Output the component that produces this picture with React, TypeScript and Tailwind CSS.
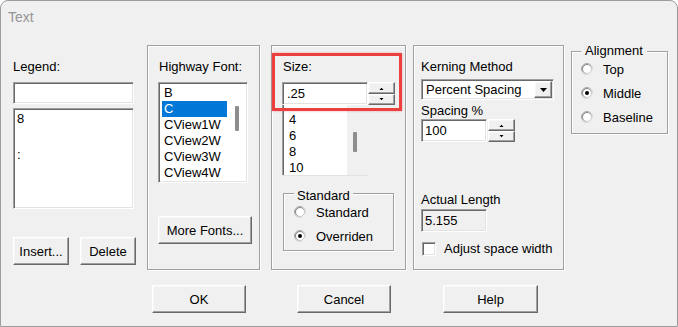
import React from "react";

const sunken =
  "border border-t-[#a0a0a0] border-l-[#a0a0a0] border-r-white border-b-white shadow-[inset_1px_1px_0_#696969,inset_-1px_-1px_0_#e3e3e3]";
const raised =
  "border border-t-white border-l-white border-r-[#696969] border-b-[#696969] shadow-[inset_-1px_-1px_0_#a0a0a0,inset_1px_1px_0_#f7f7f7] bg-[#f0f0f0]";
const etched = "border border-[#a0a0a0] shadow-[inset_1px_1px_0_#ffffff,1px_1px_0_#ffffff]";

function Btn({ className, children }: { className: string; children: React.ReactNode }) {
  return (
    <div className={`${raised} ${className} flex items-center justify-center leading-[15px]`}>
      {children}
    </div>
  );
}

function Spin() {
  return (
    <div className="flex flex-col w-[27px] h-[23px]">
      <div className={`h-[12px] ${raised} flex items-center justify-center`}>
        <svg width="5" height="3" viewBox="0 0 5 3">
          <polygon points="0.5,3 2.5,0.8 4.5,3" fill="#000" />
        </svg>
      </div>
      <div className={`h-[11px] ${raised} flex items-center justify-center`}>
        <svg width="5" height="3" viewBox="0 0 5 3">
          <polygon points="0.5,0 4.5,0 2.5,2.2" fill="#000" />
        </svg>
      </div>
    </div>
  );
}

function Radio({ checked }: { checked?: boolean }) {
  return (
    <svg width="12" height="12" viewBox="0 0 12 12" className="shrink-0">
      <defs>
        <linearGradient id="ro" x1="0" y1="0" x2="1" y2="1">
          <stop offset="0" stopColor="#9a9a9a" />
          <stop offset="0.5" stopColor="#b8b8b8" />
          <stop offset="1" stopColor="#ffffff" />
        </linearGradient>
        <linearGradient id="ri" x1="0" y1="0" x2="1" y2="1">
          <stop offset="0" stopColor="#5a5a5a" />
          <stop offset="0.5" stopColor="#a8a8a8" />
          <stop offset="1" stopColor="#e3e3e3" />
        </linearGradient>
      </defs>
      <circle cx="6" cy="6" r="5.5" fill="none" stroke="url(#ro)" strokeWidth="1" />
      <circle cx="6" cy="6" r="4.5" fill="#fff" stroke="url(#ri)" strokeWidth="1" />
      {checked && <circle cx="6" cy="6" r="2" fill="#000" />}
    </svg>
  );
}

export default function App() {
  return (
    <div className="w-[678px] h-[327px] bg-[#f0f0f0] border border-[#9c9c9c] rounded-t-[8px] overflow-hidden font-['Liberation_Sans',Arial,sans-serif] text-[13px] text-black">
      <div className="h-[44px] pl-[7px] pt-[8px] text-[14px] leading-[17px] text-[#959595]">Text</div>

      <div className="flex items-start pl-[12px]">
        {/* Legend column */}
        <div className="w-[123px] h-[225px] flex flex-col">
          <div className="mt-[14px] leading-[15px]">Legend:</div>
          <div className={`mt-[8px] w-[121px] h-[22px] bg-white ${sunken}`} />
          <div className={`mt-[4px] w-[121px] h-[101px] bg-white ${sunken} pl-[3px] pt-[1px] leading-[18px]`}>
            <div>8</div>
            <div>&nbsp;</div>
            <div>:</div>
          </div>
          <div className="mt-[28px] flex gap-[11px]">
            <Btn className="w-[56px] h-[28px]">Insert...</Btn>
            <Btn className="w-[56px] h-[28px]">Delete</Btn>
          </div>
        </div>

        {/* Highway Font */}
        <div className={`ml-[11px] w-[113px] h-[225px] ${etched} flex flex-col pl-[10px] pt-[13px]`}>
          <div className="ml-[1px] leading-[15px]">Highway Font:</div>
          <div className={`mt-[8px] w-[90px] h-[101px] bg-white ${sunken} flex p-[2px]`}>
            <div className="ml-[1px] w-[65px] flex flex-col leading-[16px]">
              <div className="h-[16px] pl-[2px]">B</div>
              <div className="h-[16px] pl-[2px] bg-[#0078d7] text-white">C</div>
              <div className="h-[16px] pl-[2px]">CView1W</div>
              <div className="h-[16px] pl-[2px]">CView2W</div>
              <div className="h-[16px] pl-[2px]">CView3W</div>
              <div className="h-[16px] pl-[2px]">CView4W</div>
            </div>
            <div className="flex-1 flex flex-col pl-[8px] pt-[21px]">
              <div className="w-[4px] h-[25px] bg-[#8d8d8d] rounded-[1px]" />
            </div>
          </div>
          <Btn className="mt-[33px] w-[94px] h-[28px]">More Fonts...</Btn>
        </div>

        {/* Size */}
        <div className={`relative ml-[11px] w-[135px] h-[225px] ${etched} flex flex-col pl-[10px] pt-[13px]`}>
          <div className="ml-[1px] leading-[15px]">Size:</div>
          <div className="mt-[8px] flex">
            <div className={`w-[86px] h-[23px] bg-white ${sunken} pl-[4px] leading-[21px]`}>.25</div>
            <Spin />
          </div>
          <div className="w-[86px] h-[71px] flex border-b border-b-[#e3e3e3]">
            <div className="w-[65px] bg-white border-l border-l-[#a0a0a0] shadow-[inset_1px_0_0_#696969] pl-[6px] pt-[7px] leading-[16px]">
              <div>4</div>
              <div>6</div>
              <div>8</div>
              <div>10</div>
            </div>
            <div className="flex-1 flex flex-col pl-[6px] pt-[27px]">
              <div className="w-[4px] h-[20px] bg-[#8d8d8d] rounded-[1px]" />
            </div>
          </div>
          <div className={`relative mt-[17px] ml-[1px] w-[111px] h-[58px] ${etched} flex flex-col pl-[10px] pt-[6px]`}>
            <div className="absolute -top-[6px] left-[10px] px-[3px] bg-[#f0f0f0] leading-[15px]">Standard</div>
            <div className="h-[24px] flex items-center gap-[10px]">
              <Radio />
              <span className="leading-[15px]">Standard</span>
            </div>
            <div className="h-[24px] flex items-center gap-[10px]">
              <Radio checked />
              <span className="leading-[15px]">Overriden</span>
            </div>
          </div>
          <div className="absolute left-0 top-[7px] w-[130px] h-[58px] border-[3px] border-[#ec3f3f] shadow-[0_0_2px_rgba(236,63,63,0.45)]" />
        </div>

        {/* Kerning */}
        <div className={`ml-[7px] w-[151px] h-[225px] ${etched} flex flex-col pl-[7px] pt-[13px]`}>
          <div className="leading-[15px]">Kerning Method</div>
          <div className={`mt-[5px] w-[133px] h-[21px] bg-white ${sunken} flex items-center pl-[4px] pr-[1px]`}>
            <span className="flex-1 leading-[15px]">Percent Spacing</span>
            <div className={`w-[18px] h-[17px] ${raised} flex items-center justify-center`}>
              <svg width="7" height="4" viewBox="0 0 7 4">
                <polygon points="0,0 7,0 3.5,4" fill="#000" />
              </svg>
            </div>
          </div>
          <div className="mt-[3px] leading-[15px]">Spacing %</div>
          <div className="mt-[1px] flex gap-[1px]">
            <div className={`w-[66px] h-[23px] bg-white ${sunken} pl-[3px] leading-[21px]`}>100</div>
            <Spin />
          </div>
          <div className="mt-[50px] leading-[15px]">Actual Length</div>
          <div className={`mt-[2px] w-[66px] h-[23px] bg-[#f0f0f0] ${sunken} pl-[3px] leading-[21px]`}>5.155</div>
          <div className="mt-[9px] flex items-center">
            <div className={`ml-[1px] w-[14px] h-[14px] bg-white ${sunken}`} />
            <span className="ml-[8px] leading-[15px]">Adjust space width</span>
          </div>
        </div>

        {/* Alignment */}
        <div className={`relative ml-[7px] mt-[6px] w-[97px] h-[83px] ${etched} flex flex-col pl-[9px] pt-[5px]`}>
          <div className="absolute -top-[9px] left-[9px] px-[4px] bg-[#f0f0f0] leading-[15px]">Alignment</div>
          <div className="h-[24px] flex items-center gap-[10px]">
            <Radio />
            <span className="leading-[15px]">Top</span>
          </div>
          <div className="h-[24px] flex items-center gap-[10px]">
            <Radio checked />
            <span className="leading-[15px]">Middle</span>
          </div>
          <div className="h-[24px] flex items-center gap-[10px]">
            <Radio />
            <span className="leading-[15px]">Baseline</span>
          </div>
        </div>
      </div>

      <div className="mt-[15px] flex pl-[151px]">
        <Btn className="w-[94px] h-[28px]">OK</Btn>
        <Btn className="ml-[51px] w-[94px] h-[28px]">Cancel</Btn>
        <Btn className="ml-[52px] w-[95px] h-[28px]">Help</Btn>
      </div>
    </div>
  );
}
